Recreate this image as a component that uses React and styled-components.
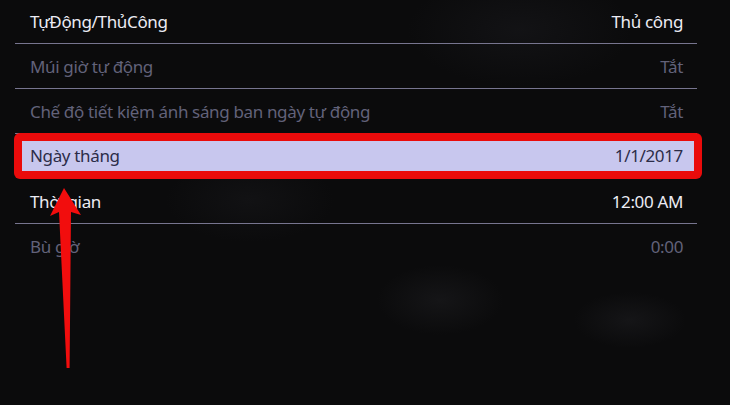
import React from "react";
import styled, { createGlobalStyle } from "styled-components";

const Global = createGlobalStyle`
  html, body { margin: 0; padding: 0; background: #0b0b0c; }
  body { font-family: "Noto Sans", "Open Sans", sans-serif; }
`;

const Screen = styled.div`
  position: relative;
  width: 730px;
  height: 405px;
  overflow: hidden;
  background:
    radial-gradient(ellipse 90px 50px at 440px 300px, rgba(40,40,44,0.35), transparent 70%),
    radial-gradient(ellipse 80px 40px at 630px 320px, rgba(36,36,40,0.4), transparent 70%),
    radial-gradient(ellipse 120px 60px at 250px 200px, rgba(30,30,34,0.35), transparent 70%),
    radial-gradient(ellipse 160px 80px at 520px 30px, rgba(26,26,30,0.5), transparent 70%),
    #0b0b0c;
`;

const List = styled.div`
  display: flex;
  flex-direction: column;
  margin-top: -1px;
  padding: 0 33px 0 15px;
`;

const Row = styled.div`
  display: flex;
  align-items: center;
  justify-content: space-between;
  height: 44px;
  padding: ${(p) => (p.$focused ? "0" : "0 14px 0 15px")};
  border-bottom: 1px solid ${(p) => (p.$divider ? "#77758f" : "transparent")};
  font-size: 17px;
  letter-spacing: -0.35px;
  color: ${(p) => (p.$dim ? "#62627a" : "#ececf4")};
`;

const Frame = styled.div`
  position: relative;
  z-index: 1;
  display: flex;
  flex: 1;
  box-sizing: border-box;
  height: 46px;
  margin: -1px -5px 0 -1px;
  padding: 8px;
  border-radius: 6px;
  background: #ea0b0b;
`;

const Focus = styled.div`
  display: flex;
  flex: 1;
  align-items: center;
  justify-content: space-between;
  padding: 0 11px 0 8px;
  background: #c8c7ee;
  color: #2c2c48;
`;

const Label = styled.span`
  white-space: nowrap;
`;

const Value = styled.span`
  white-space: nowrap;
`;

const Pointer = styled.svg`
  position: absolute;
  left: 0;
  top: 0;
  pointer-events: none;
`;

const rows = [
  { label: "TựĐộng/ThủCông", value: "Thủ công", divider: true },
  { label: "Múi giờ tự động", value: "Tắt", dim: true, divider: true },
  { label: "Chế độ tiết kiệm ánh sáng ban ngày tự động", value: "Tắt", dim: true, divider: true },
  { label: "Ngày tháng", value: "1/1/2017", focused: true },
  { label: "Thời gian", value: "12:00 AM", divider: true },
  { label: "Bù giờ", value: "0:00", dim: true },
];

export default function App() {
  return (
    <Screen>
      <Global />
      <List>
        {rows.map((r) =>
          r.focused ? (
            <Row key={r.label} $focused>
              <Frame>
                <Focus>
                  <Label>{r.label}</Label>
                  <Value>{r.value}</Value>
                </Focus>
              </Frame>
            </Row>
          ) : (
            <Row key={r.label} $dim={r.dim} $divider={r.divider}>
              <Label>{r.label}</Label>
              <Value>{r.value}</Value>
            </Row>
          )
        )}
      </List>
      <Pointer width="730" height="405" viewBox="0 0 730 405">
        <polygon
          points="64,188 81,215 71,212 69.6,368 66.6,368 59,212 50,216"
          fill="#f20d0d"
        />
      </Pointer>
    </Screen>
  );
}
